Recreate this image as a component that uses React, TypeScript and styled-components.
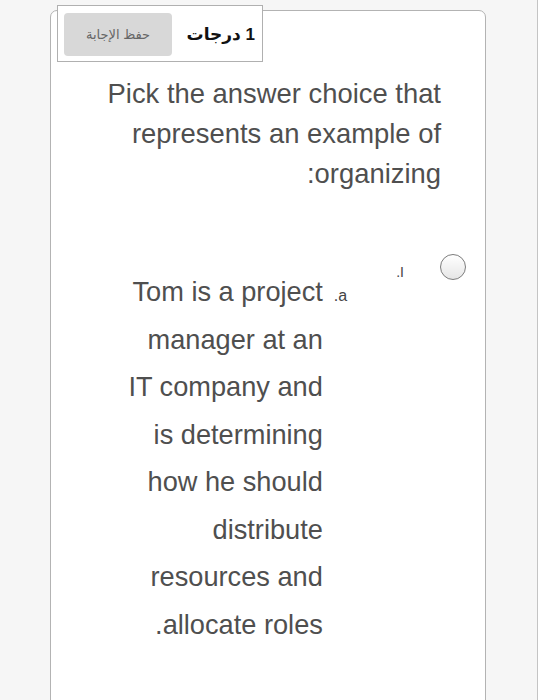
import React from "react";
import styled, { createGlobalStyle } from "styled-components";

const GlobalStyle = createGlobalStyle`
  html, body {
    margin: 0;
    padding: 0;
    background: #f6f6f6;
    font-family: "Liberation Sans", "DejaVu Sans", Arial, sans-serif;
  }
`;

const Page = styled.div`
  box-sizing: border-box;
  width: 538px;
  height: 100vh;
  overflow: hidden;
  padding: 10px 0 0 50px;
  border-right: 1px solid #c4c4c4;
`;

const Card = styled.div`
  box-sizing: border-box;
  width: 436px;
  height: 720px;
  background: #fff;
  border: 1px solid #b3b3b3;
  border-radius: 7px;
  display: flex;
  flex-direction: column;
`;

const Header = styled.div`
  box-sizing: border-box;
  width: 206px;
  height: 57px;
  margin: -6px 0 0 6px;
  padding: 7px 7px 5px 6px;
  background: #fff;
  border: 1px solid #b0b0b0;
  display: flex;
  direction: rtl;
  align-items: center;
  justify-content: space-between;
`;

const Points = styled.span`
  font-size: 17px;
  font-weight: bold;
  color: #111;
`;

const SaveButton = styled.button`
  width: 108px;
  height: 43px;
  border: none;
  border-radius: 4px;
  background: #d8d8d8;
  color: #666;
  font-family: inherit;
  font-size: 13px;
  padding: 0;
`;

const Question = styled.p`
  width: 345px;
  margin: 12px 44px 0 auto;
  direction: rtl;
  text-align: right;
  font-size: 27.4px;
  line-height: 40px;
  color: #4f4f4f;
`;

const OptionRow = styled.div`
  display: flex;
  direction: rtl;
  align-items: flex-start;
  margin-top: 60px;
  padding-right: 19px;
`;

const Radio = styled.span`
  box-sizing: border-box;
  flex: none;
  width: 26px;
  height: 26px;
  border-radius: 50%;
  border: 1.5px solid #7c7c7c;
  background: linear-gradient(#ffffff, #e6e6e6);
  margin-left: 36px;
`;

const OptionLabel = styled.span`
  font-size: 14px;
  line-height: 20px;
  color: #444;
  margin: 8px 0 0 49px;
`;

const Answer = styled.div`
  display: flex;
  align-items: baseline;
  margin-top: 14px;
  gap: 11px;
`;

const Marker = styled.span`
  font-size: 16px;
  line-height: 47.5px;
  color: #444;
`;

const AnswerText = styled.div`
  width: 202px;
  text-align: right;
  font-size: 27.2px;
  line-height: 47.5px;
  color: #4f4f4f;
`;

export default function App() {
  return (
    <>
      <GlobalStyle />
      <Page>
        <Card>
          <Header>
            <Points>1 درجات</Points>
            <SaveButton>حفظ الإجابة</SaveButton>
          </Header>
          <Question>
            Pick the answer choice that represents an example of organizing:
          </Question>
          <OptionRow>
            <Radio />
            <OptionLabel>I.</OptionLabel>
            <Answer>
              <Marker>a.</Marker>
              <AnswerText>
                Tom is a project manager at an IT company and is determining
                how he should distribute resources and allocate roles.
              </AnswerText>
            </Answer>
          </OptionRow>
        </Card>
      </Page>
    </>
  );
}
